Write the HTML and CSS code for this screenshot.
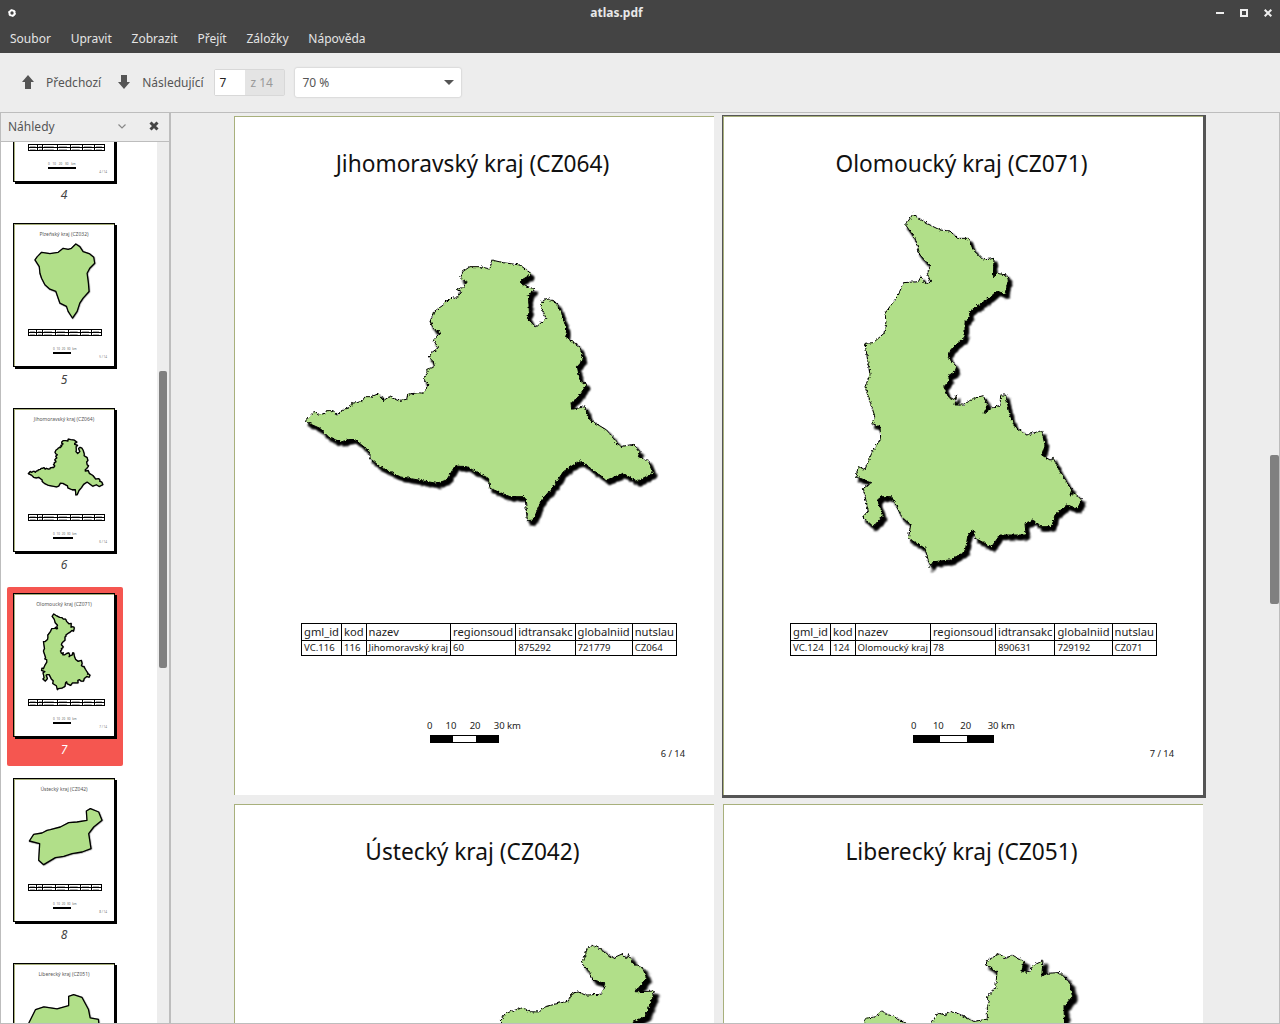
FILE: index.html
```html
<!DOCTYPE html>
<html lang="cs">
<head>
    <meta charset="UTF-8">
    <meta name="viewport" content="width=device-width, initial-scale=1.0">
    <title>atlas.pdf</title>
    <link rel="stylesheet" href="styles.css">
</head>
<body>
    <svg class="shapes" aria-hidden="true">
        <defs>
            <filter id="rough" x="-10%" y="-10%" width="125%" height="125%">
                <feTurbulence type="fractalNoise" baseFrequency="0.13" numOctaves="3" seed="4" result="noise"/>
                <feDisplacementMap in="SourceGraphic" in2="noise" scale="11" xChannelSelector="R" yChannelSelector="G" result="edge"/>
                <feOffset in="edge" dx="10" dy="11" result="moved"/>
                <feColorMatrix in="moved" type="matrix" values="0 0 0 0 0  0 0 0 0 0  0 0 0 0 0  0 0 0 1 0" result="dark"/>
                <feGaussianBlur in="dark" stdDeviation="3.5" result="shade"/>
                <feMerge>
                    <feMergeNode in="shade"/>
                    <feMergeNode in="shade"/>
                    <feMergeNode in="edge"/>
                </feMerge>
            </filter>
            <polygon id="jihomoravsky" vector-effect="non-scaling-stroke" points="45,515 72,484 85,495 105,490 110,482 130,482 142,497 160,478 180,472 185,460 215,455 225,440 245,440 265,431 280,452 298,440 325,452 350,448 353,433 385,428 400,430 417,405 398,385 412,375 410,358 433,350 430,335 417,322 425,308 445,293 430,270 453,250 430,235 420,215 432,185 460,165 465,155 480,150 490,140 495,150 515,125 502,118 520,112 532,95 512,85 518,65 540,50 570,50 600,57 605,30 640,38 690,45 725,72 695,90 695,103 735,118 715,135 718,185 712,205 738,232 768,205 750,160 770,145 795,155 815,190 830,240 827,262 870,290 880,330 862,350 870,390 890,405 865,440 843,460 845,478 885,470 900,510 950,540 970,565 990,590 1030,583 1050,605 1045,620 1075,632 1090,668 1040,695 1000,670 950,690 870,632 820,665 790,710 755,750 730,810 712,812 705,740 660,740 600,715 595,685 530,650 495,648 470,690 440,700 330,680 270,650 240,625 240,605 190,565 155,575 120,565 90,535"/>
            <polygon id="olomoucky" vector-effect="non-scaling-stroke" points="197,60 218,28 260,55 300,75 330,78 352,100 385,100 400,135 430,165 462,160 460,215 470,205 500,210 505,225 495,268 472,258 440,285 415,300 388,320 390,335 375,350 375,395 345,420 332,435 325,458 350,485 345,500 325,512 330,525 312,545 325,575 345,585 350,568 345,600 370,600 400,580 430,572 442,600 432,625 445,615 480,600 482,570 497,570 510,630 525,665 560,690 605,677 615,720 605,750 630,765 640,760 660,800 695,855 690,870 705,865 725,885 712,912 680,900 645,930 635,965 600,965 580,945 555,955 558,990 480,990 455,1025 405,1000 400,975 385,985 375,1040 330,1065 280,1070 270,1085 255,1030 205,1000 212,960 185,935 155,875 125,875 112,885 130,930 100,965 68,935 85,920 70,850 95,833 48,815 55,785 75,793 95,745 122,700 120,665 95,655 105,635 75,545 90,510 75,415 100,413 132,385 138,350 135,325 175,270 190,233 235,230 243,215 255,235 272,232 262,205 272,185 240,150 225,100"/>
            <polygon id="plzensky" vector-effect="non-scaling-stroke" points="105,360 112,350 125,337 150,341 175,337 190,325 205,328 215,325 228,312 240,320 250,335 270,342 282,352 285,370 270,385 262,400 266,430 268,455 250,475 240,490 232,515 218,535 205,515 200,500 180,490 168,455 150,448 135,435 125,415 120,400 118,380"/>
            <polygon id="ustecky-small" vector-effect="non-scaling-stroke" points="87,212 100,192 125,188 140,180 150,178 180,170 205,157 230,155 260,150 258,122 270,115 295,125 305,150 280,170 265,190 272,235 245,245 215,250 190,258 165,262 130,283 115,270 118,220"/>
            <polygon id="liberecky-small" vector-effect="non-scaling-stroke" points="85,760 105,720 130,712 170,718 205,708 205,680 220,675 245,683 265,720 270,745 295,750 300,800 85,800"/>
        </defs>
    </svg>

    <div class="window">
        <div class="titlebar">
            <svg class="app-icon" viewBox="0 0 8 8">
                <circle cx="4" cy="4" r="2.6" fill="none" stroke="#fff" stroke-width="1.9"/>
                <circle cx="4" cy="4" r="3.6" fill="none" stroke="#fff" stroke-width="0.8" stroke-dasharray="1.8 1.97"/>
            </svg>
            <div class="window-title">atlas.pdf</div>
            <div class="window-buttons">
                <svg viewBox="0 0 8 8"><rect x="0" y="3" width="8" height="2" fill="#eee"/></svg>
                <svg viewBox="0 0 8 8"><path d="M1 1h6v6h-6z" fill="none" stroke="#eee" stroke-width="2"/></svg>
                <svg viewBox="0 0 8 8"><path d="M0.7 0.7l6.6 6.6M7.3 0.7l-6.6 6.6" fill="none" stroke="#eee" stroke-width="2"/></svg>
            </div>
        </div>
        <div class="menubar">
            <span>Soubor</span>
            <span>Upravit</span>
            <span>Zobrazit</span>
            <span>Přejít</span>
            <span>Záložky</span>
            <span>Nápověda</span>
        </div>

        <div class="toolbar">
            <div class="tool-btn">
                <svg viewBox="0 0 12 14"><path d="M6 0l6 7h-3v7h-6v-7h-3z" fill="#555"/></svg>
                <span>Předchozí</span>
            </div>
            <div class="tool-btn tool-next">
                <svg viewBox="0 0 12 14"><path d="M3 0h6v7h3l-6 7-6-7h3z" fill="#555"/></svg>
                <span>Následující</span>
            </div>
            <div class="page-field">
                <span class="page-input">7</span>
                <span class="page-total">z 14</span>
            </div>
            <div class="zoom-select">
                <span>70 %</span>
                <i class="caret"></i>
            </div>
        </div>

        <div class="main">
            <div class="sidebar">
                <div class="sidebar-head">
                    <span class="sidebar-title">Náhledy</span>
                    <svg class="chevron" viewBox="0 0 8 5"><path d="M0.5 0.5l3.5 3.5 3.5-3.5" fill="none" stroke="#888" stroke-width="1.2"/></svg>
                    <svg class="sidebar-close" viewBox="0 0 10 10"><path d="M1.5 1.5l7 7M8.5 1.5l-7 7" fill="none" stroke="#444" stroke-width="3"/></svg>
                </div>
                <div class="thumb-scroll">
                    <div class="thumb-list">
                        <div class="thumb-item">
                            <div class="thumb">
                                <div class="thumb-map-area"></div>
                                <div class="thumb-table wide"><i></i><i></i><i></i><i></i><i></i><i></i><i></i><i></i><i></i><i></i><i></i><i></i><i></i><i></i></div>
                                <div class="thumb-labels long">0 10 20 30 km</div>
                                <div class="thumb-scale long"></div>
                                <div class="thumb-num">4 / 14</div>
                            </div>
                            <div class="thumb-label">4</div>
                        </div>
                        <div class="thumb-item">
                            <div class="thumb">
                                <div class="thumb-title">Plzeňský kraj (CZ032)</div>
                                <div class="thumb-map-area">
                                    <svg class="thumb-map map-plzen" viewBox="100 300 200 250"><use href="#plzensky" class="region small"/></svg>
                                </div>
                                <div class="thumb-table"><i></i><i></i><i></i><i></i><i></i><i></i><i></i><i></i><i></i><i></i><i></i><i></i><i></i><i></i></div>
                                <div class="thumb-labels">0 10 20 30 km</div>
                                <div class="thumb-scale"></div>
                                <div class="thumb-num">5 / 14</div>
                            </div>
                            <div class="thumb-label">5</div>
                        </div>
                        <div class="thumb-item">
                            <div class="thumb">
                                <div class="thumb-title">Jihomoravský kraj (CZ064)</div>
                                <div class="thumb-map-area">
                                    <svg class="thumb-map map-jm" viewBox="0 0 1140 870"><use href="#jihomoravsky" class="region small"/></svg>
                                </div>
                                <div class="thumb-table wide"><i></i><i></i><i></i><i></i><i></i><i></i><i></i><i></i><i></i><i></i><i></i><i></i><i></i><i></i></div>
                                <div class="thumb-labels">0 10 20 30 km</div>
                                <div class="thumb-scale mid"></div>
                                <div class="thumb-num">6 / 14</div>
                            </div>
                            <div class="thumb-label">6</div>
                        </div>
                        <div class="thumb-item current">
                            <div class="thumb">
                                <div class="thumb-title">Olomoucký kraj (CZ071)</div>
                                <div class="thumb-map-area">
                                    <svg class="thumb-map map-ol" viewBox="0 0 780 1125"><use href="#olomoucky" class="region small"/></svg>
                                </div>
                                <div class="thumb-table wide"><i></i><i></i><i></i><i></i><i></i><i></i><i></i><i></i><i></i><i></i><i></i><i></i><i></i><i></i></div>
                                <div class="thumb-labels">0 10 20 30 km</div>
                                <div class="thumb-scale"></div>
                                <div class="thumb-num">7 / 14</div>
                            </div>
                            <div class="thumb-label">7</div>
                        </div>
                        <div class="thumb-item">
                            <div class="thumb">
                                <div class="thumb-title">Ústecký kraj (CZ042)</div>
                                <div class="thumb-map-area">
                                    <svg class="thumb-map map-us" viewBox="80 110 230 180"><use href="#ustecky-small" class="region small"/></svg>
                                </div>
                                <div class="thumb-table"><i></i><i></i><i></i><i></i><i></i><i></i><i></i><i></i><i></i><i></i><i></i><i></i><i></i><i></i></div>
                                <div class="thumb-labels">0 10 20 30 km</div>
                                <div class="thumb-scale"></div>
                                <div class="thumb-num">8 / 14</div>
                            </div>
                            <div class="thumb-label">8</div>
                        </div>
                        <div class="thumb-item">
                            <div class="thumb">
                                <div class="thumb-title">Liberecký kraj (CZ051)</div>
                                <div class="thumb-map-area">
                                    <svg class="thumb-map map-li" viewBox="80 670 230 130"><use href="#liberecky-small" class="region small"/></svg>
                                </div>
                            </div>
                        </div>
                    </div>
                    <div class="thumb-gutter"><div class="thumb-scrollbar"></div></div>
                </div>
            </div>

            <div class="viewer">
                <div class="pages">
                    <div class="page">
                        <h1>Jihomoravský kraj (CZ064)</h1>
                        <div class="map-area">
                            <svg class="map map-jihomoravsky" viewBox="0 0 1140 870"><use href="#jihomoravsky" class="region"/></svg>
                        </div>
                        <table class="attrs">
                            <tr><th>gml_id</th><th>kod</th><th>nazev</th><th>regionsoud</th><th>idtransakc</th><th>globalniid</th><th>nutslau</th></tr>
                            <tr><td>VC.116</td><td>116</td><td>Jihomoravský kraj</td><td>60</td><td>875292</td><td>721779</td><td>CZ064</td></tr>
                        </table>
                        <div class="scale scale-a">
                            <div class="scale-labels"><span>0</span><span>10</span><span>20</span><span>30 km</span></div>
                            <div class="scale-bar"><i></i><i></i><i></i></div>
                        </div>
                        <div class="page-num">6 / 14</div>
                    </div>

                    <div class="page selected">
                        <h1>Olomoucký kraj (CZ071)</h1>
                        <div class="map-area">
                            <svg class="map map-olomoucky" viewBox="0 0 780 1125"><use href="#olomoucky" class="region"/></svg>
                        </div>
                        <table class="attrs">
                            <tr><th>gml_id</th><th>kod</th><th>nazev</th><th>regionsoud</th><th>idtransakc</th><th>globalniid</th><th>nutslau</th></tr>
                            <tr><td>VC.124</td><td>124</td><td>Olomoucký kraj</td><td>78</td><td>890631</td><td>729192</td><td>CZ071</td></tr>
                        </table>
                        <div class="scale scale-b">
                            <div class="scale-labels"><span>0</span><span>10</span><span>20</span><span>30 km</span></div>
                            <div class="scale-bar"><i></i><i></i><i></i></div>
                        </div>
                        <div class="page-num">7 / 14</div>
                    </div>

                    <div class="page">
                        <h1>Ústecký kraj (CZ042)</h1>
                        <div class="map-area">
                            <svg class="map map-ustecky" viewBox="0 0 450 500" preserveAspectRatio="none">
                                <polygon class="region" vector-effect="non-scaling-stroke" points="30,265 40,250 65,240 88,232 105,245 130,245 140,232 170,222 205,213 215,190 230,185 250,195 292,192 300,160 270,150 260,125 240,100 255,55 270,45 300,65 320,85 345,72 358,85 360,68 375,100 400,115 410,145 380,185 430,183 420,220 405,260 375,275 375,500 30,500"/>
                            </svg>
                        </div>
                    </div>

                    <div class="page">
                        <h1>Liberecký kraj (CZ051)</h1>
                        <div class="map-area">
                            <svg class="map map-liberecky" viewBox="960 0 600 400" preserveAspectRatio="none">
                                <polygon class="region" vector-effect="non-scaling-stroke" points="980,270 985,265 1005,262 1025,243 1040,255 1055,258 1070,272 1090,282 1120,300 1155,280 1170,250 1190,255 1205,245 1225,252 1265,275 1300,268 1300,230 1305,215 1298,200 1322,175 1325,125 1295,105 1300,92 1330,72 1350,85 1365,75 1395,95 1390,125 1410,128 1415,110 1445,92 1442,140 1460,130 1490,128 1515,160 1522,200 1500,230 1505,400 980,400"/>
                            </svg>
                        </div>
                    </div>
                </div>
                <div class="viewer-scrollbar"></div>
            </div>
        </div>
    </div>
</body>
</html>
```

FILE: styles.css
```css
* {
    box-sizing: border-box;
}
html, body {
    height: 100%;
}
body {
    margin: 0;
    font-family: "Noto Sans", sans-serif;
    font-size: 12px;
    background-color: #ededed;
    overflow: hidden;
}
.shapes {
    display: block;
    width: 0;
    height: 0;
}
.window {
    display: flex;
    flex-direction: column;
    height: 1024px;
    border-bottom: 1px solid #bdbdbd;
}

/* title and menu */
.titlebar {
    display: flex;
    align-items: center;
    justify-content: space-between;
    height: 25px;
    padding: 0 8px;
    background-color: #444444;
}
.app-icon {
    width: 8px;
    height: 8px;
}
.window-title {
    flex: 1;
    padding-left: 1px;
    text-align: center;
    font-size: 12px;
    font-weight: 700;
    color: #e8e8e8;
}
.window-buttons {
    display: flex;
    gap: 16px;
}
.window-buttons svg {
    display: block;
    width: 8px;
    height: 8px;
}
.menubar {
    display: flex;
    gap: 19.8px;
    height: 28px;
    padding: 5px 10px 0;
    background-color: #444444;
    color: #e4e4e4;
    font-size: 12px;
    line-height: 18px;
}

/* toolbar */
.toolbar {
    display: flex;
    align-items: center;
    height: 59px;
    padding: 0 0 1px 22px;
    color: #555;
}
.tool-btn {
    display: flex;
    align-items: center;
    gap: 12px;
}
.tool-btn svg {
    width: 12px;
    height: 14px;
}
.tool-next {
    margin-left: 17px;
}
.page-field {
    display: flex;
    margin-left: 10px;
    height: 27px;
    border: 1px solid #d8d8d8;
    border-radius: 2px;
    line-height: 25px;
}
.page-input {
    width: 30px;
    padding-left: 5px;
    background-color: #fff;
    color: #222;
}
.page-total {
    width: 39px;
    padding-left: 6px;
    background-color: #e4e4e4;
    color: #999;
}
.zoom-select {
    display: flex;
    align-items: center;
    justify-content: space-between;
    width: 166px;
    height: 29px;
    margin-left: 10px;
    padding: 0 7px 0 8px;
    background-color: #fff;
    border-radius: 2px;
    box-shadow: 0 0 2px rgba(0,0,0,0.25);
}
.caret {
    width: 0;
    height: 0;
    border-left: 5.5px solid transparent;
    border-right: 5.5px solid transparent;
    border-top: 5px solid #555;
}

/* sidebar */
.main {
    flex: 1;
    display: flex;
    min-height: 0;
    border-top: 1px solid #bdbdbd;
}
.sidebar {
    display: flex;
    flex-direction: column;
    width: 171px;
    border-left: 1px solid #bdbdbd;
    border-right: 2px solid #bdbdbd;
}
.sidebar-head {
    display: flex;
    align-items: center;
    height: 29px;
    padding: 0 10px 2px 7px;
    border-bottom: 1px solid #bdbdbd;
    color: #555;
}
.sidebar-title {
    flex: 1;
}
.chevron {
    width: 8px;
    height: 5px;
    margin-right: 23px;
}
.sidebar-close {
    width: 10px;
    height: 10px;
}
.thumb-scroll {
    flex: 1;
    display: flex;
    min-height: 0;
    overflow: hidden;
}
.thumb-list {
    width: 156px;
    padding-left: 6px;
    background-color: #fff;
    overflow: hidden;
}
.thumb-gutter {
    flex: 1;
    padding: 229px 0 0 2px;
    background-color: #ededed;
}
.thumb-scrollbar {
    width: 8px;
    height: 297px;
    border-radius: 2px;
    background-color: #808080;
}
.thumb-item {
    width: 116px;
    height: 179px;
    margin-bottom: 6px;
    padding: 6px;
    border-radius: 2px;
}
.thumb-item:first-child {
    margin-top: -110px;
}
.thumb-item.current {
    background-color: #f55650;
}
.thumb {
    width: 102px;
    height: 144px;
    border: 1px solid #000;
    box-shadow: 2px 2px 0 #000, inset 1px 1px 0 #a8b07c;
    background-color: #fff;
}
.thumb-title {
    height: 15px;
    padding-top: 6px;
    text-align: center;
    font-size: 5px;
    line-height: 8px;
    color: #555;
}
.thumb-map-area {
    display: flow-root;
    height: 91px;
}
.thumb-title + .thumb-map-area {
    height: 90px;
}
.thumb:not(:has(.thumb-title)) .thumb-map-area {
    height: 105px;
}
.thumb-map {
    display: block;
    overflow: visible;
}
.map-plzen {
    width: 67px;
    height: 83px;
    margin: 1px 0 0 19px;
}
.map-jm {
    width: 81.5px;
    height: 62px;
    margin: 13px 0 0 11px;
}
.map-ol {
    width: 56px;
    height: 80.5px;
    margin: 3px 0 0 24px;
}
.map-us {
    width: 76.7px;
    height: 60px;
    margin: 13px 0 0 13px;
}
.map-li {
    width: 76.7px;
    height: 43px;
    margin: 14px 0 0 13px;
}
.thumb-table {
    display: grid;
    grid-template-columns: 7fr 4fr 12fr 11fr 10fr 10fr 8fr;
    width: 74px;
    height: 7px;
    margin-left: 14px;
    gap: 1px;
    padding: 1px;
    background-color: #000;
}
.thumb-table.wide {
    width: 77px;
}
.thumb-table i {
    background-color: #fff;
    background-image: linear-gradient(#aaa, #aaa);
    background-size: 70% 1px;
    background-position: 1px 50%;
    background-repeat: no-repeat;
}
.thumb-labels {
    height: 3px;
    margin: 12px 0 0 39px;
    font-size: 3px;
    line-height: 3px;
    word-spacing: 1px;
    white-space: nowrap;
    color: #666;
}
.thumb-labels.long {
    margin-left: 34px;
    word-spacing: 2px;
}
.thumb-scale {
    width: 18px;
    height: 2px;
    margin: 1px 0 0 39px;
    background-color: #000;
}
.thumb-scale.mid {
    width: 20px;
}
.thumb-scale.long {
    width: 28px;
    margin-left: 34px;
}
.thumb-num {
    margin: 1px 7px 0 0;
    text-align: right;
    font-size: 3px;
    line-height: 4px;
    color: #777;
}
.thumb-label {
    margin-top: 5px;
    padding-right: 2px;
    text-align: center;
    font-size: 12px;
    font-style: italic;
    line-height: 16px;
    color: #444;
}
.current .thumb-label {
    color: #fff;
}

/* document */
.viewer {
    flex: 1;
    position: relative;
    min-width: 0;
    overflow: hidden;
    border-right: 1px solid #bdbdbd;
}
.pages {
    display: grid;
    grid-template-columns: 480px 480px;
    grid-auto-rows: 679px;
    gap: 9px;
    padding: 3px 0 0 63px;
}
.page {
    background-color: #fff;
    border-top: 1px solid #a8b07c;
    border-left: 1px solid #a8b07c;
}
.page.selected {
    box-shadow: -1px -1px 0 #555, 3px 3px 0 #555, 3px -1px 0 #555, -1px 3px 0 #555;
}
.page h1 {
    height: 64px;
    margin: 0;
    padding: 30px 4px 0 0;
    text-align: center;
    font-size: 22.7px;
    font-weight: 400;
    line-height: 34px;
    color: #111;
}
.map-area {
    display: flow-root;
    height: 442px;
}
.map {
    display: block;
    overflow: visible;
}
.region {
    fill: #b1df89;
    stroke: #000;
    stroke-width: 1px;
    stroke-linejoin: round;
    filter: url(#rough);
}
.region.small {
    stroke-width: 1.3px;
    filter: drop-shadow(1px 1px 0 rgba(0,0,0,0.6));
}
.map-jihomoravsky {
    width: 380px;
    height: 290px;
    margin: 69px 0 0 55px;
}
.map-olomoucky {
    width: 260px;
    height: 375px;
    margin: 24px 0 0 116px;
}
.map-ustecky {
    width: 172px;
    height: 167px;
    margin: 61px 0 0 255px;
}
.map-liberecky {
    width: 230px;
    height: 133px;
    margin: 61px 0 0 133px;
}
.attrs {
    margin-left: 66px;
    border-collapse: collapse;
    white-space: nowrap;
    color: #222;
}
.attrs th, .attrs td {
    padding: 0 2px;
    border: 1px solid #000;
    text-align: left;
    font-weight: 400;
}
.attrs th {
    height: 17px;
    padding-bottom: 1px;
    font-size: 11.2px;
    line-height: 15px;
}
.attrs td {
    height: 15px;
    font-size: 9.6px;
    line-height: 14px;
}
.scale {
    margin-top: 64px;
    color: #222;
    font-size: 9.5px;
}
.scale-a {
    width: 94px;
    margin-left: 192px;
}
.scale-b {
    width: 104px;
    margin-left: 187px;
}
.scale-labels {
    display: flex;
    justify-content: space-between;
    line-height: 12px;
}
.scale-bar {
    display: flex;
    width: 69px;
    height: 8px;
    margin: 3px 0 0 3px;
    border: 1px solid #000;
}
.scale-b .scale-bar {
    width: 81px;
    margin-left: 2px;
}
.scale-bar i {
    flex: 1;
    background-color: #000;
}
.scale-bar i:nth-child(2) {
    background-color: #fff;
}
.page-num {
    margin: 5px 29px 0 0;
    text-align: right;
    font-size: 9.3px;
    line-height: 12px;
    color: #222;
}
.viewer-scrollbar {
    position: absolute;
    top: 342px;
    right: 0;
    width: 9px;
    height: 149px;
    border-radius: 2px;
    background-color: #808080;
}
```
